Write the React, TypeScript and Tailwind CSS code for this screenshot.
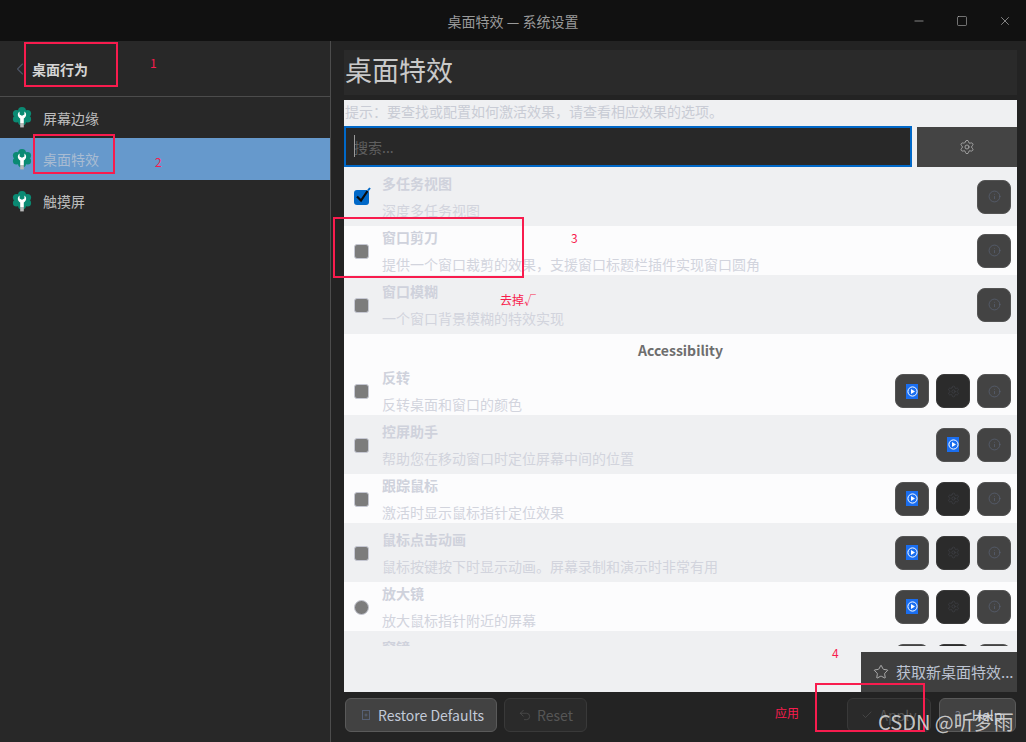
import { Check, ChevronLeft, Info, Minus, Settings, Square, Star, Undo2, X } from "lucide-react";

function AppIcon() {
  return (
    <svg width="20" height="21" viewBox="0 0 20 21" className="shrink-0">
      <g fill="#0b8a73">
        <circle cx="10" cy="4" r="4" />
        <circle cx="15.5" cy="6.5" r="3.6" />
        <circle cx="15.5" cy="12" r="3.6" />
        <circle cx="10" cy="14.5" r="4" />
        <circle cx="4.5" cy="12" r="3.6" />
        <circle cx="4.5" cy="6.5" r="3.6" />
        <circle cx="10" cy="9" r="6" />
      </g>
      <path d="M7.6 4.6 C5.2 6 5.2 10 8.2 11.4 L8.2 16 L11.8 16 L11.8 11.4 C14.8 10 14.8 6 12.4 4.6 L12.4 7.4 L10 8.8 L7.6 7.4 Z" fill="#ffffff" />
      <rect x="8.2" y="16" width="3.6" height="4.4" fill="#b9b9b9" />
    </svg>
  );
}

function PlayBadge() {
  return (
    <span className="flex h-[15px] w-[12px] items-center justify-center bg-[#1a6ef0]">
      <svg width="11" height="11" viewBox="0 0 11 11">
        <circle cx="5.5" cy="5.5" r="4.6" fill="none" stroke="#ffffff" strokeWidth="1" />
        <path d="M4 3 L8 5.5 L4 8 Z" fill="#ffffff" />
      </svg>
    </span>
  );
}

function IconButton({ kind }: { kind: "play" | "gear" | "info" }) {
  if (kind === "gear") {
    return (
      <button className="flex h-[34px] w-[34px] items-center justify-center rounded-lg border border-[#3a3a3a] bg-[#2b2b2b]">
        <Settings size={13} strokeWidth={1} color="#44474e" />
      </button>
    );
  }
  return (
    <button className="flex h-[34px] w-[34px] items-center justify-center rounded-lg border border-[#545454] bg-[#434343]">
      {kind === "play" ? <PlayBadge /> : <Info size={13} strokeWidth={1.2} color="#5b6578" />}
    </button>
  );
}

type Effect = {
  title: string;
  sub: string;
  buttons: ("play" | "gear" | "info")[];
  check?: "checked" | "radio";
};

function Row({ effect, tall, gray }: { effect: Effect; tall: "h-[59px]" | "h-[49px]" | "h-[48px]"; gray: boolean }) {
  return (
    <div className={`flex shrink-0 items-center pl-[10px] pr-[6px] ${tall} ${gray ? "bg-[#eff0f2]" : "bg-[#fcfcfd]"}`}>
      {effect.check === "checked" ? (
        <span className="relative mt-px h-[15px] w-[15px] rounded-[3px] bg-[#0068c8]">
          <svg width="18" height="18" viewBox="0 0 18 18" className="absolute -top-[3px] left-0">
            <path d="M14 3.5 L16 1" stroke="#0068c8" strokeWidth="2" fill="none" />
            <path d="M3 9.5 L7 13.5 L13.5 4" stroke="#0b0b0b" strokeWidth="2.2" fill="none" />
          </svg>
        </span>
      ) : (
        <span
          className={`mt-px h-[15px] w-[15px] border border-[#c5c7d2] bg-[#7c7c7c] ${
            effect.check === "radio" ? "rounded-full" : "rounded-[3px]"
          }`}
        />
      )}
      <div className="ml-[13px] flex h-full min-w-0 flex-1 flex-col justify-center">
        <div className="h-[27px] shrink-0 text-sm font-bold leading-[27px] text-[#cfd2dc]">{effect.title}</div>
        <div className="h-[27px] shrink-0 text-sm leading-[27px] text-[#d2d4dd]">{effect.sub}</div>
      </div>
      <div className="flex gap-[7px]">
        {effect.buttons.map((b, i) => (
          <IconButton key={i} kind={b} />
        ))}
      </div>
    </div>
  );
}

const firstGroup: Effect[] = [
  { title: "多任务视图", sub: "深度多任务视图", buttons: ["info"], check: "checked" },
  { title: "窗口剪刀", sub: "提供一个窗口裁剪的效果，支援窗口标题栏插件实现窗口圆角", buttons: ["info"] },
  { title: "窗口模糊", sub: "一个窗口背景模糊的特效实现", buttons: ["info"] },
];

const accessibility: Effect[] = [
  { title: "反转", sub: "反转桌面和窗口的颜色", buttons: ["play", "gear", "info"] },
  { title: "控屏助手", sub: "帮助您在移动窗口时定位屏幕中间的位置", buttons: ["play", "info"] },
  { title: "跟踪鼠标", sub: "激活时显示鼠标指针定位效果", buttons: ["play", "gear", "info"] },
  { title: "鼠标点击动画", sub: "鼠标按键按下时显示动画。屏幕录制和演示时非常有用", buttons: ["play", "gear", "info"] },
  { title: "放大镜", sub: "放大鼠标指针附近的屏幕", buttons: ["play", "gear", "info"], check: "radio" },
  { title: "窗镜", sub: "放大鼠标指针附近的区域", buttons: ["play", "gear", "info"], check: "radio" },
];

function SideItem({ label, active, short }: { label: string; active?: boolean; short?: boolean }) {
  return (
    <div className={`flex items-center pl-[12px] ${short ? "h-[41px]" : "h-[42px]"} ${active ? "bg-[#6699cc]" : ""}`}>
      <AppIcon />
      <span className={`ml-[11px] text-sm ${active ? "text-[#a9bcd2]" : "text-[#bdbdbd]"}`}>{label}</span>
    </div>
  );
}

function RedBox({ className }: { className: string }) {
  return <div className={`pointer-events-none absolute border-[2px] border-[#f81c4e] ${className}`} />;
}

function RedText({ className, children }: { className: string; children: React.ReactNode }) {
  return <span className={`absolute text-xs leading-none text-[#f81c4e] ${className}`}>{children}</span>;
}

export default function App() {
  return (
    <div
      className="relative flex h-[742px] w-[1026px] flex-col overflow-hidden bg-[#282828]"
      style={{ fontFamily: '"Noto Sans CJK SC", "Noto Sans", sans-serif' }}
    >
      {/* title bar */}
      <header className="relative flex h-[41px] shrink-0 items-center justify-center bg-[#111111] text-sm text-[#9a9a9a]">
        桌面特效 — 系统设置
        <div className="absolute right-[14px] top-0 flex h-full items-center gap-[30px] text-[#b5b5b5]">
          <Minus size={14} strokeWidth={1.2} />
          <Square size={12} strokeWidth={1.2} />
          <X size={14} strokeWidth={1.2} />
        </div>
      </header>

      <div className="flex min-h-0 flex-1">
        {/* sidebar */}
        <aside className="w-[331px] shrink-0 border-r border-[#4c4c4c] bg-[#282828]">
          <div className="flex h-[56px] items-center border-b border-[#4c4c4c] pl-[10px]">
            <ChevronLeft size={20} strokeWidth={1.3} color="#4d5565" />
            <span className="ml-[2px] text-sm font-bold text-[#d5d5d5]">桌面行为</span>
          </div>
          <SideItem label="屏幕边缘" short />
          <SideItem label="桌面特效" active />
          <SideItem label="触摸屏" />
        </aside>

        {/* content */}
        <main className="flex min-w-0 flex-1 flex-col bg-[#232323] pl-[13px] pr-[9px] pt-[9px]">
          <div className="flex h-[45px] shrink-0 items-center bg-[#2a2a2a] pb-[7px] pl-px text-[27px] leading-none text-[#c9c9c9]">
            桌面特效
          </div>
          <div className="mt-[5px] flex min-h-0 flex-1 flex-col bg-[#eff0f2]">
            <div className="flex h-[26px] shrink-0 items-center pb-[5px] pl-px text-sm text-[#c9ccd5]">
              提示：要查找或配置如何激活效果，请查看相应效果的选项。
            </div>
            <div className="flex h-[41px] shrink-0">
              <div className="relative flex h-[41px] w-[568px] items-center border-2 border-[#0068c8] bg-[#282828] pl-[8px] text-sm text-[#5f5f5f]">
                <span className="absolute left-[8px] top-[7px] h-[22px] w-px bg-[#9a9a9a]" />
                搜索...
              </div>
              <div className="ml-[5px] mt-px flex h-[40px] flex-1 items-center justify-center bg-[#444444]">
                <Settings size={16} strokeWidth={1.2} color="#b5b5b5" />
              </div>
            </div>
            <div className="flex h-[479px] shrink-0 flex-col overflow-hidden">
              <Row effect={firstGroup[0]} tall="h-[59px]" gray />
              <Row effect={firstGroup[1]} tall="h-[49px]" gray={false} />
              <Row effect={firstGroup[2]} tall="h-[59px]" gray />
              <div className="flex h-[33px] shrink-0 items-center justify-center bg-[#fcfcfd] pb-[2px] text-sm font-bold text-[#6e6e6e]">
                Accessibility
              </div>
              <Row effect={accessibility[0]} tall="h-[48px]" gray={false} />
              <Row effect={accessibility[1]} tall="h-[59px]" gray />
              <Row effect={accessibility[2]} tall="h-[49px]" gray={false} />
              <Row effect={accessibility[3]} tall="h-[59px]" gray />
              <Row effect={accessibility[4]} tall="h-[49px]" gray={false} />
              <Row effect={accessibility[5]} tall="h-[59px]" gray />
            </div>
          </div>

          {/* bottom buttons */}
          <div className="flex h-[50px] shrink-0 items-start pl-px pr-px pt-[6px]">
            <button className="flex h-[34px] w-[152px] items-center gap-[8px] rounded-md border border-[#5a5a5a] bg-[#424242] pl-[16px] text-sm text-[#c3cad8]">
              <svg width="8" height="10" viewBox="0 0 8 10">
                <rect x="0.5" y="0.5" width="7" height="9" fill="none" stroke="#566075" />
                <path d="M2.5 5 H5.5 M4 3.5 V6.5" stroke="#566075" />
              </svg>
              Restore Defaults
            </button>
            <button className="ml-[7px] flex h-[34px] w-[83px] items-center justify-center gap-[5px] rounded-md border border-[#393939] bg-[#2a2a2a] text-sm text-[#565656]">
              <Undo2 size={14} strokeWidth={1.1} color="#565656" />
              Reset
            </button>
            <button className="ml-auto flex h-[34px] w-[84px] items-center justify-center gap-[6px] rounded-md border border-[#393939] bg-[#2a2a2a] text-sm text-[#565656]">
              <Check size={12} strokeWidth={1.2} color="#565656" />
              Apply
            </button>
            <button className="ml-[8px] flex h-[34px] w-[77px] items-center gap-[11px] rounded-md border border-[#5a5a5a] bg-[#424242] pl-[15px] text-sm text-[#c3cad8]">
              <span className="text-xs text-[#7a8090]">?</span>
              Help
            </button>
          </div>
        </main>
      </div>

      {/* overlay that sits over the list */}
      <div className="absolute left-[861px] top-[652px] flex h-[40px] w-[156px] items-center gap-[7px] bg-[#3f3f3f] pl-[12px] text-[15px] text-[#bcc3d2]">
        <Star size={16} strokeWidth={1.2} color="#c5c5c5" />
        <span className="whitespace-nowrap">获取新桌面特效...</span>
      </div>

      {/* annotations drawn on the screenshot */}
      <RedBox className="left-[24px] top-[42px] h-[45px] w-[94px]" />
      <RedBox className="left-[33px] top-[134px] h-[40px] w-[82px]" />
      <RedBox className="left-[333px] top-[217px] h-[61px] w-[191px]" />
      <RedBox className="left-[815px] top-[683px] h-[49px] w-[110px]" />
      <RedText className="left-[150px] top-[57px]">1</RedText>
      <RedText className="left-[155px] top-[156px]">2</RedText>
      <RedText className="left-[571px] top-[232px]">3</RedText>
      <RedText className="left-[500px] top-[294px]">去掉√</RedText>
      <RedText className="left-[832px] top-[647px]">4</RedText>
      <RedText className="left-[775px] top-[707px]">应用</RedText>
      <div className="absolute left-[878px] top-[708px] whitespace-nowrap text-xl leading-[28px] text-[#d8d8d8]/90">
        CSDN @听梦雨
      </div>
    </div>
  );
}
